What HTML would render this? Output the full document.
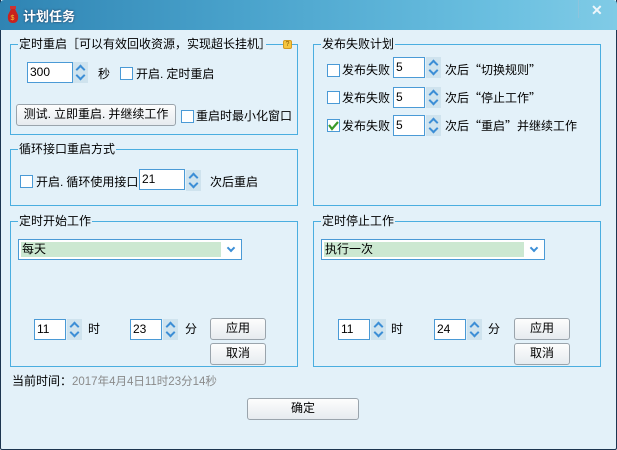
<!DOCTYPE html>
<html><head><meta charset="utf-8"><style>
*{margin:0;padding:0;box-sizing:border-box}
body{width:617px;height:450px;overflow:hidden;background:#fff;font-family:"Liberation Sans","Noto Sans CJK SC","WenQuanYi Zen Hei",sans-serif;font-size:12px;color:#000;position:relative}
.cj{font-family:"Noto Sans CJK SC","WenQuanYi Zen Hei",sans-serif}
.d{margin-right:3px}
.win{position:absolute;left:0;top:0;width:617px;height:450px;background:#e3f1f9;border:1px solid #1c3550;border-top:none;border-radius:0 0 2px 2px}
.title{position:absolute;left:0;top:0;width:617px;height:30px;background:linear-gradient(90deg,#2f84b3 0%,#4aa3cc 40%,#6abfe0 80%,#80cbe6 100%);border-radius:4px 4px 0 0}
.title .t{position:absolute;left:23px;top:6px;color:#fff;font-weight:bold;font-size:13px;text-shadow:0 0 2px #235}
.a{position:absolute;white-space:nowrap;line-height:14px}
.g{position:absolute;border:1px solid #4aaee0}
.lg{position:absolute;top:-8px;left:7px;background:#e3f1f9;padding:0 1px;line-height:14px;white-space:nowrap}
.in{position:absolute;background:#fff;border:1px solid #4a9ad6;height:21px;padding-left:2px;line-height:19px;font-family:"Liberation Sans",sans-serif;font-size:12px}
.sp{position:absolute;width:15px;height:21px;background:#cfe3ee}
.sp:before,.sp:after{content:"";position:absolute;left:4px;width:5px;height:5px;border-left:2px solid #3c8ed6;border-top:2px solid #3c8ed6}
.sp:before{top:4px;transform:rotate(45deg)}
.sp:after{top:10px;transform:rotate(-135deg)}
.cb{position:absolute;width:13px;height:13px;background:#fff;border:1px solid #4a9ad6}
.bt{position:absolute;border:1px solid #9aa4ac;border-radius:3px;background:linear-gradient(#fdfdfd,#e6ebef);text-align:center;line-height:19px;white-space:nowrap}
.cmb{position:absolute;background:#fff;border:1px solid #4a9ad6;height:21px}
.cmb .f{position:absolute;left:2px;top:2px;bottom:2px;right:20px;background:#cce8d1;line-height:15px;padding-left:1px}
.cmb .ar{position:absolute;right:7px;top:5px;width:6px;height:6px;border-right:2px solid #3c8ed6;border-bottom:2px solid #3c8ed6;transform:rotate(45deg)}
</style></head><body>
<div class="win"></div>
<div class="title">
 <svg style="position:absolute;left:7px;top:6px" width="12" height="18" viewBox="0 0 12 18"><rect x="3" y="0" width="6" height="3" fill="#c33"/><path d="M4 3 L8 3 L11 9 Q12 17 6 17 Q0 17 1 9 Z" fill="#c9221e"/><text x="3.5" y="14" font-size="7" fill="#f6c430" font-family="Liberation Sans">$</text></svg>
 <div class="t">计划任务</div>
 <div style="position:absolute;left:578px;top:0;width:1px;height:18px;background:#8ec4dd"></div>
 <div style="position:absolute;left:591px;top:2px;color:#eef6fb;font-weight:bold;font-size:14px;font-family:'Liberation Sans',sans-serif">✕</div>
</div>

<div class="g" style="left:10px;top:44px;width:288px;height:91px"><div class="lg cj">定时重启［可以有效回收资源，实现超长挂机］</div></div>
<div style="position:absolute;left:270px;top:39px;width:22px;height:13px;background:#e3f1f9"></div>
<div style="position:absolute;left:266px;top:44px;width:17px;height:1px;background:#4aaee0"></div>
<div style="position:absolute;left:283px;top:40px;width:9px;height:9px;background:#f5c640;border:1px solid #d39a20;border-radius:2px;font-size:7px;line-height:7px;text-align:center;color:#8a5a00">?</div>
<div class="in" style="left:27px;top:62px;width:46px">300</div><div class="sp" style="left:73px;top:62px"></div>
<div class="a" style="left:98px;top:67px">秒</div>
<div class="cb" style="left:120px;top:67px"></div><div class="a" style="left:136px;top:67px">开启.<span class="d"></span>定时重启</div>
<div class="bt" style="left:16px;top:104px;width:160px;height:22px">测试.<span class="d"></span>立即重启.<span class="d"></span>并继续工作</div>
<div class="cb" style="left:181px;top:110px"></div><div class="a" style="left:196px;top:109px">重启时最小化窗口</div>

<div class="g" style="left:10px;top:149px;width:288px;height:57px"><div class="lg">循环接口重启方式</div></div>
<div class="cb" style="left:20px;top:175px"></div><div class="a" style="left:36px;top:175px">开启.<span class="d"></span>循环使用接口</div>
<div class="in" style="left:139px;top:169px;width:46px">21</div><div class="sp" style="left:186px;top:170px"></div>
<div class="a" style="left:210px;top:175px">次后重启</div>

<div class="g" style="left:10px;top:221px;width:288px;height:146px"><div class="lg">定时开始工作</div></div>
<div class="cmb" style="left:18px;top:239px;width:224px"><div class="f">每天</div><div class="ar"></div></div>
<div class="in" style="left:34px;top:319px;width:32px">11</div><div class="sp" style="left:67px;top:319px"></div><div class="a" style="left:88px;top:322px">时</div>
<div class="in" style="left:130px;top:319px;width:32px">23</div><div class="sp" style="left:163px;top:319px"></div><div class="a" style="left:185px;top:322px">分</div>
<div class="bt" style="left:210px;top:318px;width:56px;height:22px">应用</div>
<div class="bt" style="left:210px;top:343px;width:56px;height:22px">取消</div>

<div class="g" style="left:313px;top:44px;width:288px;height:162px"><div class="lg">发布失败计划</div></div>
<div class="cb" style="left:327px;top:64px"></div><div class="a" style="left:342px;top:63px">发布失败</div>
<div class="in" style="left:393px;top:57px;width:32px">5</div><div class="sp" style="left:426px;top:57px"></div><div class="a cj" style="left:445px;top:63px">次后“切换规则”</div>
<div class="cb" style="left:327px;top:91px"></div><div class="a" style="left:342px;top:91px">发布失败</div>
<div class="in" style="left:393px;top:87px;width:32px">5</div><div class="sp" style="left:426px;top:87px"></div><div class="a cj" style="left:445px;top:91px">次后“停止工作”</div>
<div class="cb" style="left:327px;top:119px"><svg width="11" height="11" style="position:absolute;left:0;top:0"><path d="M1 5 L4 9 L10 2" stroke="#3a9a2a" stroke-width="2.2" fill="none"/></svg></div><div class="a" style="left:342px;top:119px">发布失败</div>
<div class="in" style="left:393px;top:115px;width:32px">5</div><div class="sp" style="left:426px;top:115px"></div><div class="a cj" style="left:445px;top:119px">次后“重启”并继续工作</div>

<div class="g" style="left:313px;top:221px;width:288px;height:146px"><div class="lg">定时停止工作</div></div>
<div class="cmb" style="left:321px;top:239px;width:224px"><div class="f">执行一次</div><div class="ar"></div></div>
<div class="in" style="left:338px;top:319px;width:32px">11</div><div class="sp" style="left:371px;top:319px"></div><div class="a" style="left:391px;top:322px">时</div>
<div class="in" style="left:434px;top:319px;width:32px">24</div><div class="sp" style="left:467px;top:319px"></div><div class="a" style="left:488px;top:322px">分</div>
<div class="bt" style="left:514px;top:318px;width:56px;height:22px">应用</div>
<div class="bt" style="left:514px;top:343px;width:56px;height:22px">取消</div>

<div class="a" style="left:12px;top:374px">当前时间：</div>
<div class="a" style="left:72px;top:375px;color:#8a8a8a;font-size:11.5px">2017年4月4日11时23分14秒</div>
<div class="bt" style="left:247px;top:398px;width:112px;height:22px">确定</div>
</body></html>
